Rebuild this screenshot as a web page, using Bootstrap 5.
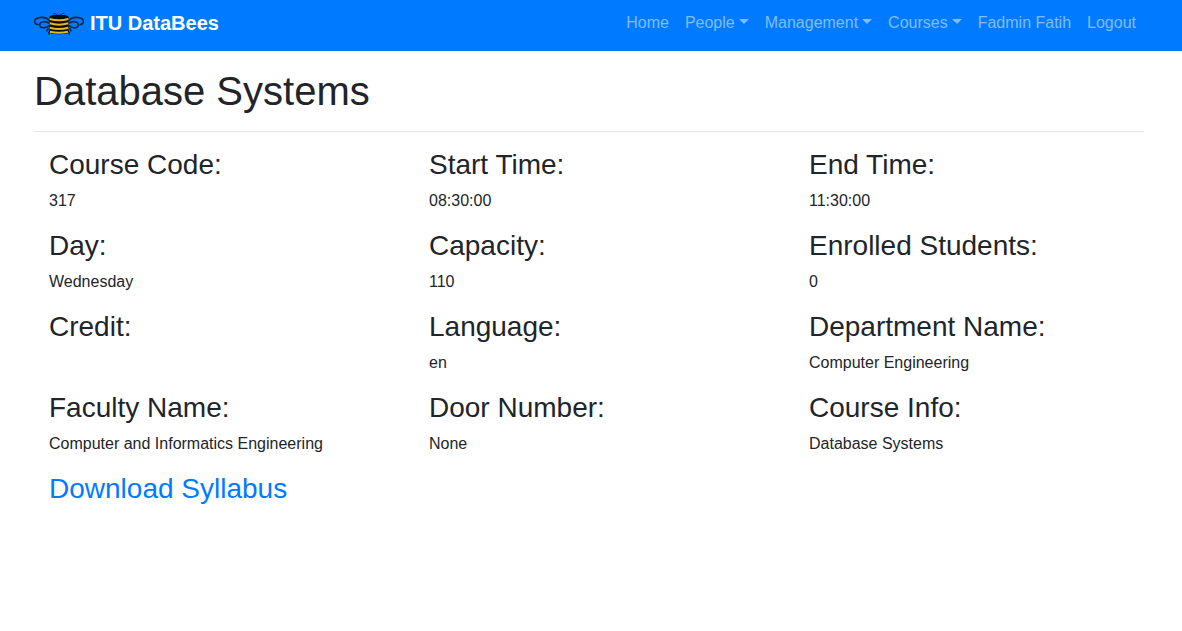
<!DOCTYPE html>
<html lang="en">
<head>
<meta charset="utf-8">
<meta name="viewport" content="width=device-width, initial-scale=1">
<title>Database Systems - ITU DataBees</title>
<link rel="stylesheet" href="https://cdn.jsdelivr.net/npm/bootstrap@5.3.0/dist/css/bootstrap.min.css">
<style>
  body { font-family: "Liberation Sans", Arial, sans-serif; color: #212529; }
  .page-width { max-width: 1144px; padding-left: 15px; padding-right: 19px; }
  .site-nav { background: #007bff; padding: 3px 0 8px; }
  .site-nav .nav-link { color: rgba(255, 255, 255, .5); }
  .site-nav .nav-link:hover { color: rgba(255, 255, 255, .75); }
  .site-nav .dropdown-toggle::after { border-width: 5px 5px 0; margin-left: 4px; }
  .site-nav .navbar-brand { gap: 6px; line-height: 30px; }
  .course-title { font-size: 40px; line-height: 48px; }
  .title-rule { border-top: 1px solid rgba(0, 0, 0, .1); opacity: 1; }
  .details { margin-left: -15px; margin-right: -15px; }
  .details > div { padding-left: 30px; padding-right: 0; }
  .details h3 { font-size: 28px; line-height: 33px; font-weight: 400; }
  .details a { color: #007bff; }
</style>
</head>
<body>
<nav class="navbar navbar-expand-lg navbar-dark site-nav">
  <div class="container-fluid page-width">
    <a class="navbar-brand fw-bold d-flex align-items-center me-3" href="#">
      <svg width="50" height="28" viewBox="0 -10 150 84" fill="none" aria-hidden="true">
        <g stroke="#0f2a4c" stroke-width="5" stroke-linecap="round">
          <path d="M47 25C36 12 14 13 5 20C-1 27 2 36 12 37"/>
          <path d="M46 33C34 24 18 28 17 37C16 49 34 49 46 40"/>
          <path d="M103 25C114 12 136 13 145 20C151 27 148 36 138 37"/>
          <path d="M104 33C116 24 132 28 133 37C134 49 116 49 104 40"/>
          <path d="M69 8Q66 3 59 4M81 8Q83 2 90 2" stroke-width="3"/>
          <path d="M48 47Q38 50 39 56M102 47Q112 50 111 56M50 55Q42 58 45 66M100 55Q108 58 105 66" stroke-width="4"/>
        </g>
        <path d="M46 14C46 5 104 5 104 14V60C104 68 46 68 46 60Z" fill="#0c0d0d"/>
        <g stroke="#e7b526" stroke-width="6">
          <path d="M47 20Q75 28 103 20M47 33Q75 41 103 33M47 46Q75 54 103 46M48 58Q75 64 102 58"/>
        </g>
      </svg>
      <span>ITU DataBees</span>
    </a>
    <button class="navbar-toggler" type="button" data-bs-toggle="collapse" data-bs-target="#mainMenu" aria-controls="mainMenu" aria-expanded="false" aria-label="Toggle navigation"><span class="navbar-toggler-icon"></span></button>
    <div class="collapse navbar-collapse" id="mainMenu">
      <ul class="navbar-nav ms-auto">
        <li class="nav-item"><a class="nav-link" href="#">Home</a></li>
        <li class="nav-item"><a class="nav-link dropdown-toggle" href="#">People</a></li>
        <li class="nav-item"><a class="nav-link dropdown-toggle" href="#">Management</a></li>
        <li class="nav-item"><a class="nav-link dropdown-toggle" href="#">Courses</a></li>
        <li class="nav-item"><a class="nav-link" href="#">Fadmin Fatih</a></li>
        <li class="nav-item"><a class="nav-link" href="#">Logout</a></li>
      </ul>
    </div>
  </div>
</nav>
<main class="container-fluid page-width pt-3">
  <h1 class="course-title fw-normal mb-0">Database Systems</h1>
  <hr class="title-rule my-3">
  <div class="row details">
    <div class="col-md-4"><h3>Course Code:</h3><p>317</p></div>
    <div class="col-md-4"><h3>Start Time:</h3><p>08:30:00</p></div>
    <div class="col-md-4"><h3>End Time:</h3><p>11:30:00</p></div>
    <div class="col-md-4"><h3>Day:</h3><p>Wednesday</p></div>
    <div class="col-md-4"><h3>Capacity:</h3><p>110</p></div>
    <div class="col-md-4"><h3>Enrolled Students:</h3><p>0</p></div>
    <div class="col-md-4"><h3>Credit:</h3></div>
    <div class="col-md-4"><h3>Language:</h3><p>en</p></div>
    <div class="col-md-4"><h3>Department Name:</h3><p>Computer Engineering</p></div>
    <div class="col-md-4"><h3>Faculty Name:</h3><p>Computer and Informatics Engineering</p></div>
    <div class="col-md-4"><h3>Door Number:</h3><p>None</p></div>
    <div class="col-md-4"><h3>Course Info:</h3><p>Database Systems</p></div>
    <div class="col-md-4"><h3><a class="text-decoration-none" href="#">Download Syllabus</a></h3></div>
  </div>
</main>
<script src="https://cdn.jsdelivr.net/npm/bootstrap@5.3.0/dist/js/bootstrap.bundle.min.js"></script>
</body>
</html>
